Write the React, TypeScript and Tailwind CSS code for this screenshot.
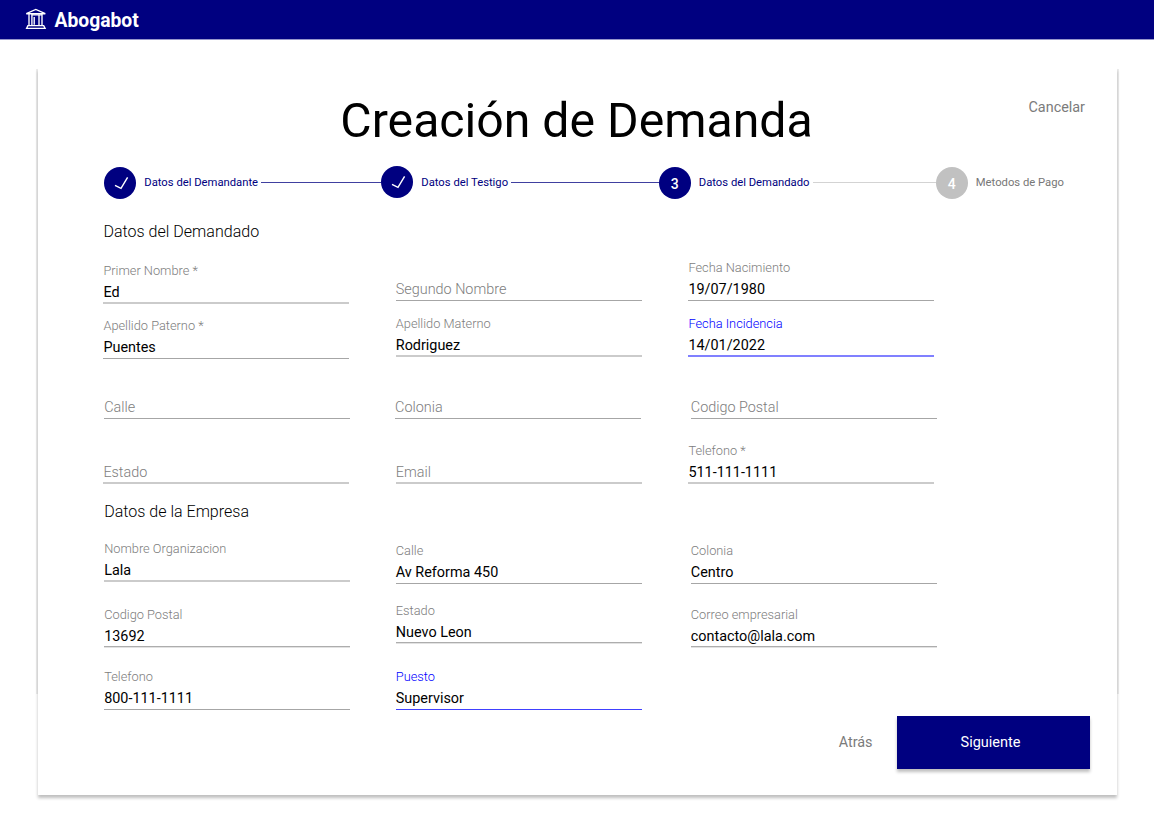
import React from "react";

type Tone = "sharp" | "medium" | "soft" | "active" | "focus";

type FieldProps = {
  label: string;
  value?: string;
  className?: string;
  tone?: Tone;
};

const BORDERS: Record<Tone, string> = {
  sharp: "border-b border-[#a6a6a6]",
  medium: "border-b border-[#adadad] shadow-[0_1px_0_#e2e2e2]",
  soft: "border-b-2 border-[#cbcbcb]",
  active: "border-b-2 border-[#8080ff]",
  focus: "border-b border-[#4040ff]",
};

const LABEL_LEADING: Record<Tone, string> = {
  sharp: "leading-[20px]",
  medium: "leading-[22px]",
  soft: "leading-[22px]",
  active: "leading-[22px]",
  focus: "leading-[20px]",
};

const VALUE_LEADING: Record<Tone, string> = {
  sharp: "leading-[23px]",
  medium: "leading-[25px]",
  soft: "leading-[25px]",
  active: "leading-[25px]",
  focus: "leading-[23px]",
};

function Field({ label, value, className = "", tone = "sharp" }: FieldProps) {
  const highlighted = tone === "active" || tone === "focus";
  const labelColor = highlighted ? "text-[#0000ff]" : "text-[#7d7d7d]";
  return (
    <label className={`flex h-[44px] w-[246px] shrink-0 flex-col ${className}`}>
      <span className={`h-5 text-[12.8px] font-light ${LABEL_LEADING[tone]} ${labelColor}`}>{value ? label : ""}</span>
      <span className={`box-content h-[22px] text-[14.4px] ${VALUE_LEADING[tone]} ${BORDERS[tone]} ${value ? "text-black" : "font-light text-[#7d7d7d]"}`}>
        {value ?? label}
      </span>
    </label>
  );
}

function Check() {
  return (
    <svg viewBox="0 0 32 32" className="h-8 w-8" fill="none" stroke="white" strokeWidth="1.4">
      <path d="M11 18.4 L17 21.4 L23.6 10.3" />
    </svg>
  );
}

type StepProps = { n: number; label: string; done?: boolean; pending?: boolean; line?: string; className?: string; dot?: string };

function Step({ n, label, done, pending, line, className = "", dot = "" }: StepProps) {
  return (
    <div className={`flex h-8 items-center ${className}`}>
      <div className={`flex h-8 w-8 shrink-0 items-center justify-center rounded-full text-[14px] font-medium text-white ${dot} ${pending ? "bg-[#c1c1c1]" : "bg-[#000080]"}`}>
        {done ? <Check /> : <span className="pt-[2px]">{n}</span>}
      </div>
      <span className={`ml-2 text-[11.25px] leading-4 whitespace-nowrap ${pending ? "text-[#777777]" : "text-[#000080]"}`}>{label}</span>
      {line && <div className={`mb-px ml-[3px] h-px flex-1 ${line}`} />}
    </div>
  );
}

function Courthouse() {
  return (
    <svg viewBox="0 0 22 22" className="mb-[2px] h-[22px] w-[22px]" fill="none" stroke="white" strokeWidth="1.35">
      <path d="M1.3 5.7 L10.8 1.5 L20.3 5.7 Z" />
      <path d="M4 5.7v12.3 M6.9 5.7v12.3 M9.2 9v7.8 M14 7v10.8 M17 5.7v12.3 M6.9 6.9h10" />
      <path d="M2.9 17.6h15.8 l1.4 2.8 H1.6 Z" />
    </svg>
  );
}

export default function App() {
  return (
    <div className="h-[822px] w-[1154px] overflow-hidden bg-white font-['Roboto',sans-serif]">
      <header className="flex h-10 items-center border-b border-[#9696cc] bg-[#000080] pl-[25px]">
        <Courthouse />
        <span className="ml-[7.5px] pt-[2px] text-[19.3px] leading-6 font-bold text-white">Abogabot</span>
      </header>
      <main className="relative mt-[28px] ml-[38px] flex h-[727px] w-[1079px] flex-col bg-white shadow-[0_3px_3px_rgba(0,0,0,0.25)]">
        <div className="pointer-events-none absolute -inset-x-[2px] top-px h-[625px] border-x-2 border-black/[0.07]" />
        <div className="flex h-[99px] shrink-0 pt-[25px]">
          <div className="w-[118px]" />
          <h1 className="-mt-px flex-1 text-center text-[48.2px] leading-[58px]">Creación de Demanda</h1>
          <button className="mr-[32px] h-[30px] w-[88px] text-right text-[14.4px] leading-[30px] text-[#7b7b7b]">Cancelar</button>
        </div>
        <div className="flex h-8 shrink-0 pl-[66.3px]">
          <Step n={1} label="Datos del Demandante" done line="bg-[#4040a0]" className="w-[277px]" />
          <Step n={2} label="Datos del Testigo" done line="bg-[#4040a0]" className="w-[277.5px]" dot="mb-[2px]" />
          <Step n={3} label="Datos del Demandado" line="bg-[#d3d3d3]" className="w-[277px]" />
          <Step n={4} label="Metodos de Pago" pending />
        </div>
        <h2 className="mt-[23px] ml-[65.5px] h-5 shrink-0 text-[16.05px] leading-5 font-light text-black">Datos del Demandado</h2>
        <div className="ml-[65.4px] flex h-[260px] shrink-0 pt-[16px]">
          <div className="flex w-[292px] flex-col pt-[2px]">
            <Field label="Primer Nombre *" value="Ed" tone="soft" />
            <Field label="Apellido Paterno *" value="Puentes" className="mt-[12px]" />
            <Field label="Calle" className="mt-[16px] ml-[0.8px]" />
            <Field label="Estado" className="mt-[20px]" tone="soft" />
          </div>
          <div className="flex w-[293px] flex-col">
            <Field label="Segundo Nombre" className="ml-[0.4px]" />
            <Field label="Apellido Materno" value="Rodriguez" className="mt-[11px] ml-[0.4px]" tone="soft" />
            <Field label="Colonia" className="mt-[19px] -ml-[0.3px]" />
            <Field label="Email" className="mt-[20px] ml-[0.4px]" tone="soft" />
          </div>
          <div className="flex flex-col">
            <Field label="Fecha Nacimiento" value="19/07/1980" />
            <Field label="Fecha Incidencia" value="14/01/2022" tone="active" className="mt-[11px]" />
            <Field label="Codigo Postal" className="mt-[19px] ml-[2.4px]" />
            <Field label="Telefono *" value="511-111-1111" className="mt-[20px]" tone="soft" />
          </div>
        </div>
        <h2 className="ml-[66.2px] h-5 shrink-0 text-[16.05px] leading-5 font-light text-black">Datos de la Empresa</h2>
        <div className="ml-[66.2px] flex h-[192px] shrink-0 pt-[16px]">
          <div className="flex w-[291.6px] flex-col">
            <Field label="Nombre Organizacion" value="Lala" tone="soft" />
            <Field label="Codigo Postal" value="13692" tone="medium" className="mt-[22px]" />
            <Field label="Telefono" value="800-111-1111" className="mt-[19px]" />
          </div>
          <div className="flex w-[295px] flex-col pt-[3px]">
            <Field label="Calle" value="Av Reforma 450" />
            <Field label="Estado" value="Nuevo Leon" tone="medium" className="mt-[15px]" />
            <Field label="Puesto" value="Supervisor" tone="focus" className="mt-[23px]" />
          </div>
          <div className="flex flex-col pt-[3px]">
            <Field label="Colonia" value="Centro" />
            <Field label="Correo empresarial" value="contacto@lala.com" tone="medium" className="mt-[19px]" />
          </div>
        </div>
        <div className="flex shrink-0 items-center justify-end pt-[2px] pr-[27px]">
          <button className="mr-[24.5px] pt-px text-[14.4px] text-[#7b7b7b]">Atrás</button>
          <button className="h-[53px] w-[193px] bg-[#000080] pt-px pr-[6px] text-[14.5px] text-white shadow-[0_3px_3px_rgba(0,0,0,0.25)]">Siguiente</button>
        </div>
      </main>
    </div>
  );
}
